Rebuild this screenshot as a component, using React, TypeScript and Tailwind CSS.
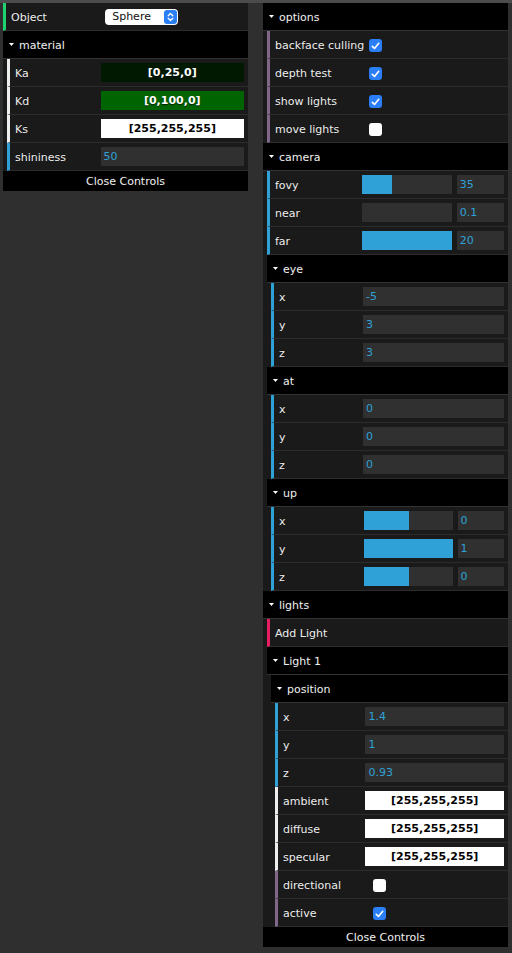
import React from "react";

const ROW =
  "flex h-[28px] shrink-0 border-b border-b-[#2c2c2c] border-l-[3px] bg-[#1a1a1a] pl-[5px] pr-[4px] leading-[29px] text-[#eee] [text-shadow:0_-1px_0_#111]";

function Label({ children }: { children: React.ReactNode }) {
  return <div className="w-[40%] shrink-0 overflow-hidden whitespace-nowrap leading-[29px]">{children}</div>;
}

function NumberRow({ label, value }: { label: string; value: string }) {
  return (
    <div className={`${ROW} border-l-[#2fa1d6]`}>
      <Label>{label}</Label>
      <div className="flex w-[60%] justify-end">
        <div className="mt-[4px] -ml-[6px] h-[19px] w-[calc(100%+6px)] shrink-0 bg-[#303030] px-[3px] leading-[20px] text-[#2fa1d6] [text-shadow:none]">
          {value}
        </div>
      </div>
    </div>
  );
}

function SliderRow({ label, value, pct }: { label: string; value: string; pct: number }) {
  return (
    <div className={`${ROW} border-l-[#2fa1d6]`}>
      <Label>{label}</Label>
      <div className="flex w-[60%]">
        <div className="mt-[4px] -ml-[5px] h-[19px] w-[66%] bg-[#303030]">
          <div className="h-full bg-[#2fa1d6]" style={{ width: `${pct}%` }} />
        </div>
        <div className="mt-[4px] ml-auto h-[19px] w-[calc(30%+6px)] bg-[#303030] px-[3px] leading-[20px] text-[#2fa1d6] [text-shadow:none]">
          {value}
        </div>
      </div>
    </div>
  );
}

function ColorRow({ label, value, bg, dark }: { label: string; value: string; bg: string; dark?: boolean }) {
  return (
    <div className={`${ROW} border-l-[#eee]`}>
      <Label>{label}</Label>
      <div className="flex w-[60%] justify-end">
        <div
          className={`mt-[4px] -ml-[6px] h-[19px] w-[calc(100%+6px)] shrink-0 text-center font-bold leading-[20px] ${
            dark ? "text-[#000] [text-shadow:none]" : "text-white [text-shadow:rgba(0,0,0,0.7)_0_1px_1px]"
          }`}
          style={{ backgroundColor: bg }}
        >
          {value}
        </div>
      </div>
    </div>
  );
}

function Check({ checked }: { checked: boolean }) {
  return checked ? (
    <div className="mt-[8px] ml-[2px] flex size-[13px] items-center justify-center rounded-[3px] bg-[#2a7ef6]">
      <svg width="9" height="8" viewBox="0 0 9 8">
        <path d="M1.3 4.3 L3.5 6.4 L7.7 1.3" fill="none" stroke="white" strokeWidth="1.6" strokeLinecap="round" strokeLinejoin="round" />
      </svg>
    </div>
  ) : (
    <div className="mt-[8px] ml-[2px] size-[13px] rounded-[3px] bg-white" />
  );
}

function BoolRow({ label, checked }: { label: string; checked: boolean }) {
  return (
    <div className={`${ROW} border-l-[#806787]`}>
      <Label>{label}</Label>
      <div className="flex w-[60%]">
        <Check checked={checked} />
      </div>
    </div>
  );
}

function Title({ children }: { children: React.ReactNode }) {
  return (
    <div className="relative h-[28px] shrink-0 border-b border-b-[#333] bg-black pl-[16px] leading-[29px] text-[#eee] [text-shadow:0_-1px_0_#111]">
      <svg className="absolute left-[6px] top-[12px]" width="5" height="3" viewBox="0 0 5 3">
        <path d="M0 0 H5 L2.5 3 Z" fill="#fff" />
      </svg>
      {children}
    </div>
  );
}

function Folder({ title, children }: { title: string; children: React.ReactNode }) {
  return (
    <div className="flex flex-col">
      <Title>{title}</Title>
      <div className="flex flex-col pl-[4px]">{children}</div>
    </div>
  );
}

function Close() {
  return (
    <div className="h-[20px] shrink-0 bg-black text-center leading-[21px] text-[#eee] [text-shadow:0_-1px_0_#111]">
      Close Controls
    </div>
  );
}

export default function App() {
  return (
    <div className="flex h-[953px] w-[512px] flex-col overflow-hidden bg-[#2f2f2f] font-['DejaVu_Sans',sans-serif] text-[11px]">
      <div className="h-[3px] shrink-0 bg-[#4c4c4c]" />
      <div className="flex items-start gap-[15px] pl-[3px]">
        {/* Left panel */}
        <div className="flex w-[245px] flex-col bg-[#1a1a1a]">
          <div className={`${ROW} border-l-[#1ed36f]`}>
            <Label>Object</Label>
            <div className="flex w-[60%]">
              <div className="relative mt-[6px] ml-[1px] h-[16px] w-[73px] rounded-[4px] bg-white pl-[7px] leading-[16px] text-[#111] [text-shadow:none]">
                Sphere
                <div className="absolute right-[1px] top-[1px] flex h-[14px] w-[13px] items-center justify-center rounded-[3px] bg-[#2a7ef6]">
                  <svg width="7" height="10" viewBox="0 0 7 10">
                    <path d="M1.2 3.8 L3.5 1.5 L5.8 3.8 M1.2 6.2 L3.5 8.5 L5.8 6.2" fill="none" stroke="white" strokeWidth="1.3" strokeLinecap="round" strokeLinejoin="round" />
                  </svg>
                </div>
              </div>
            </div>
          </div>
          <Folder title="material">
            <ColorRow label="Ka" value="[0,25,0]" bg="#001900" />
            <ColorRow label="Kd" value="[0,100,0]" bg="#006400" />
            <ColorRow label="Ks" value="[255,255,255]" bg="#ffffff" dark />
            <NumberRow label="shininess" value="50" />
          </Folder>
          <Close />
        </div>

        {/* Right panel */}
        <div className="flex w-[245px] flex-col bg-[#1a1a1a]">
          <Folder title="options">
            <BoolRow label="backface culling" checked />
            <BoolRow label="depth test" checked />
            <BoolRow label="show lights" checked />
            <BoolRow label="move lights" checked={false} />
          </Folder>
          <Folder title="camera">
            <SliderRow label="fovy" value="35" pct={34} />
            <SliderRow label="near" value="0.1" pct={0} />
            <SliderRow label="far" value="20" pct={100} />
            <Folder title="eye">
              <NumberRow label="x" value="-5" />
              <NumberRow label="y" value="3" />
              <NumberRow label="z" value="3" />
            </Folder>
            <Folder title="at">
              <NumberRow label="x" value="0" />
              <NumberRow label="y" value="0" />
              <NumberRow label="z" value="0" />
            </Folder>
            <Folder title="up">
              <SliderRow label="x" value="0" pct={50} />
              <SliderRow label="y" value="1" pct={100} />
              <SliderRow label="z" value="0" pct={50} />
            </Folder>
          </Folder>
          <Folder title="lights">
            <div className={`${ROW} border-l-[#e61d5f]`}>Add Light</div>
            <Folder title="Light 1">
              <Folder title="position">
                <NumberRow label="x" value="1.4" />
                <NumberRow label="y" value="1" />
                <NumberRow label="z" value="0.93" />
                <ColorRow label="ambient" value="[255,255,255]" bg="#ffffff" dark />
                <ColorRow label="diffuse" value="[255,255,255]" bg="#ffffff" dark />
                <ColorRow label="specular" value="[255,255,255]" bg="#ffffff" dark />
                <BoolRow label="directional" checked={false} />
                <BoolRow label="active" checked />
              </Folder>
            </Folder>
          </Folder>
          <Close />
        </div>
      </div>
    </div>
  );
}
